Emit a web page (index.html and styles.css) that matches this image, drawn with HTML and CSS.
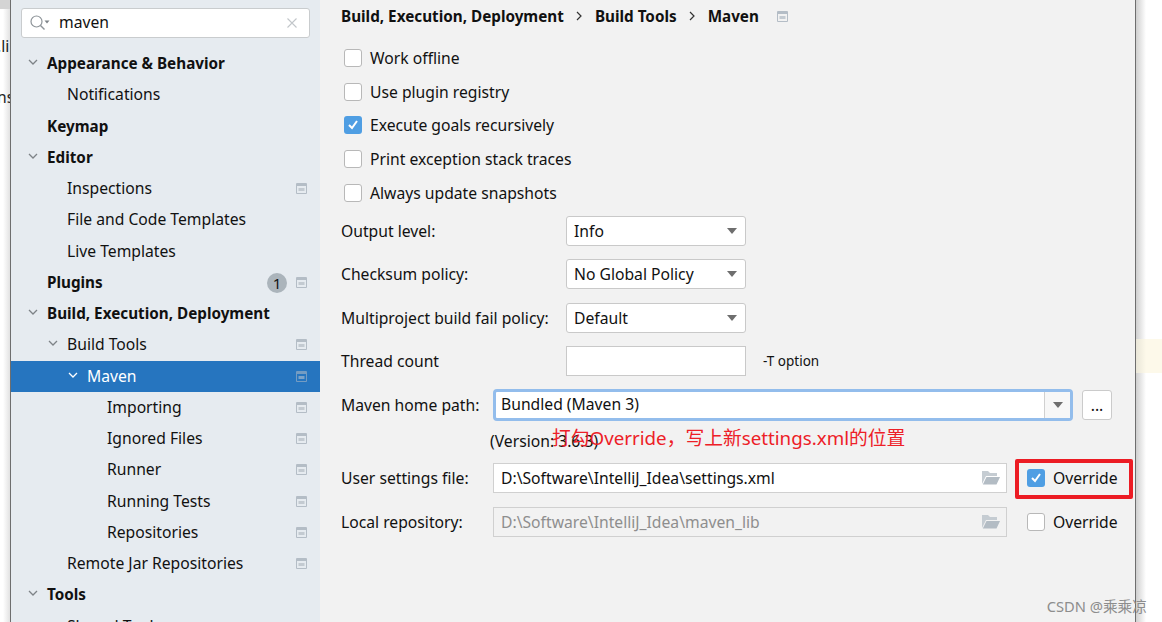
FILE: index.html
```html
<!DOCTYPE html>
<html lang="en">
<head>
    <meta charset="UTF-8">
    <meta name="viewport" content="width=device-width, initial-scale=1.0">
    <title>Settings - Maven</title>
    <link rel="stylesheet" href="styles.css">
</head>
<body>
    <svg class="defs" width="0" height="0">
        <symbol id="page" viewBox="0 0 11 11">
            <path d="M.5.5h10v10H.5z" fill="none" stroke="#b4bdc6"/>
            <path d="M1 1h9v2H1z" fill="#b4bdc6"/>
            <path d="M2.5 5h6v3h-6z" fill="#c3cad1"/>
        </symbol>
        <symbol id="open" viewBox="0 0 12 12">
            <path d="M2 4l4 4 4-4" fill="none" stroke="currentColor" stroke-width="1.3"/>
        </symbol>
        <symbol id="folder" viewBox="0 0 19 15">
            <path d="M1 14V1h6l2 2h7v3H5L1 14z" fill="#c5ccd2"/>
            <path d="M5.500 7H19l-3.500 7.500H1.800z" fill="#b3bcc4"/>
        </symbol>
    </svg>

    <div class="window-left">
        <div class="left-top"></div>
        <span class="cut-text cut-one">.li</span>
        <span class="cut-text cut-two">ns</span>
    </div>

    <aside class="sidebar">
        <div class="search">
            <svg class="search-icon" width="22" height="18" viewBox="0 0 22 18">
                <circle cx="7.500" cy="7.500" r="5.500" fill="none" stroke="#8e9499" stroke-width="1.200"/>
                <path d="M11.500 11.500l4 4" stroke="#8e9499" stroke-width="1.400"/>
                <path d="M15.500 6.500h5l-2.500 3z" fill="#7d8388"/>
            </svg>
            <span class="search-text">maven</span>
            <svg class="search-clear" width="10" height="10" viewBox="0 0 10 10">
                <path d="M.5.500l9 9M9.500.500l-9 9" stroke="#c2c6ca" stroke-width="1.100"/>
            </svg>
        </div>

        <ul class="tree">
            <li class="row lvl0 bold"><svg class="arrow"><use href="#open"/></svg>Appearance &amp; Behavior</li>
            <li class="row lvl1">Notifications</li>
            <li class="row lvl0 bold">Keymap</li>
            <li class="row lvl0 bold"><svg class="arrow"><use href="#open"/></svg>Editor</li>
            <li class="row lvl1">Inspections<svg class="page"><use href="#page"/></svg></li>
            <li class="row lvl1">File and Code Templates</li>
            <li class="row lvl1">Live Templates</li>
            <li class="row lvl0 bold">Plugins<span class="badge">1</span><svg class="page page-badge"><use href="#page"/></svg></li>
            <li class="row lvl0 bold"><svg class="arrow"><use href="#open"/></svg>Build, Execution, Deployment</li>
            <li class="row lvl1"><svg class="arrow"><use href="#open"/></svg>Build Tools<svg class="page"><use href="#page"/></svg></li>
            <li class="row lvl2 selected"><svg class="arrow"><use href="#open"/></svg>Maven<svg class="page"><use href="#page"/></svg></li>
            <li class="row lvl3">Importing<svg class="page"><use href="#page"/></svg></li>
            <li class="row lvl3">Ignored Files<svg class="page"><use href="#page"/></svg></li>
            <li class="row lvl3">Runner<svg class="page"><use href="#page"/></svg></li>
            <li class="row lvl3">Running Tests<svg class="page"><use href="#page"/></svg></li>
            <li class="row lvl3">Repositories<svg class="page"><use href="#page"/></svg></li>
            <li class="row lvl1">Remote Jar Repositories<svg class="page"><use href="#page"/></svg></li>
            <li class="row lvl0 bold"><svg class="arrow"><use href="#open"/></svg>Tools</li>
            <li class="row lvl1">Shared Tools</li>
        </ul>
    </aside>

    <main class="content">
        <div class="crumbs">
            <span>Build, Execution, Deployment</span>
            <svg class="crumb-sep" width="6" height="10" viewBox="0 0 6 10"><path d="M1 1l4 4-4 4" fill="none" stroke="#333" stroke-width="1.200"/></svg>
            <span>Build Tools</span>
            <svg class="crumb-sep" width="6" height="10" viewBox="0 0 6 10"><path d="M1 1l4 4-4 4" fill="none" stroke="#333" stroke-width="1.200"/></svg>
            <span>Maven</span>
            <svg class="page crumb-page"><use href="#page"/></svg>
        </div>

        <div class="checks">
            <label class="check"><span class="box"></span>Work offline</label>
            <label class="check"><span class="box"></span>Use plugin registry</label>
            <label class="check"><span class="box on"><svg width="18" height="18" viewBox="0 0 18 18"><path d="M5 9l3 3 5-7" fill="none" stroke="#fff" stroke-width="2"/></svg></span>Execute goals recursively</label>
            <label class="check"><span class="box"></span>Print exception stack traces</label>
            <label class="check"><span class="box"></span>Always update snapshots</label>
        </div>

        <div class="form-small">
            <div class="form-row"><span class="form-label">Output level:</span><div class="select">Info<i class="caret"></i></div></div>
            <div class="form-row"><span class="form-label">Checksum policy:</span><div class="select">No Global Policy<i class="caret"></i></div></div>
            <div class="form-row"><span class="form-label">Multiproject build fail policy:</span><div class="select">Default<i class="caret"></i></div></div>
            <div class="form-row"><span class="form-label">Thread count</span><div class="input-empty"></div><span class="hint">-T option</span></div>
        </div>

        <div class="form-wide">
            <div class="wide-row home-row">
                <span class="wide-label">Maven home path:</span>
                <div class="combo"><span class="combo-text">Bundled (Maven 3)</span><span class="combo-btn"><i class="caret"></i></span></div>
                <div class="dots">...</div>
            </div>
            <div class="version">(Version: 3.6.3)</div>
            <div class="wide-row settings-row">
                <span class="wide-label">User settings file:</span>
                <div class="path"><span>D:\Software\IntelliJ_Idea\settings.xml</span><svg class="folder"><use href="#folder"/></svg></div>
                <label class="check override"><span class="box on"><svg width="18" height="18" viewBox="0 0 18 18"><path d="M5 9l3 3 5-7" fill="none" stroke="#fff" stroke-width="2"/></svg></span>Override</label>
            </div>
            <div class="wide-row repo-row">
                <span class="wide-label">Local repository:</span>
                <div class="path disabled"><span>D:\Software\IntelliJ_Idea\maven_lib</span><svg class="folder"><use href="#folder"/></svg></div>
                <label class="check override"><span class="box"></span>Override</label>
            </div>
        </div>

        <div class="note">打勾Override，写上新settings.xml的位置</div>
        <div class="red-box"></div>
    </main>

    <div class="window-right">
        <div class="yellow-line"></div>
        <div class="watermark">CSDN @乘乘凉</div>
    </div>
</body>
</html>
```

FILE: styles.css
```css
* {
    box-sizing: border-box;
}
html, body {
    height: 100%;
}
body {
    margin: 0;
    height: 622px;
    overflow: hidden;
    display: flex;
    font-family: "Noto Sans", "Noto Sans CJK SC", sans-serif;
    font-size: 15.700px;
    color: #111;
    background: #fff;
}
.defs {
    position: absolute;
}

/* behind the dialog */
.window-left {
    position: relative;
    width: 11px;
    flex: none;
    overflow: hidden;
    background: linear-gradient(to right, #fff 0, #fff 3px, #e2e2e2 10px);
    border-right: 1px solid #6e6e6e;
}
.left-top {
    height: 9px;
    background: #d4d4d4;
}
.cut-text {
    position: absolute;
    left: -3px;
    color: #222;
}
.cut-one {
    top: 35px;
}
.cut-two {
    top: 86px;
}

/* left tree */
.sidebar {
    width: 309px;
    flex: none;
    background: #e6ebf0;
    overflow: hidden;
}
.search {
    display: flex;
    align-items: center;
    height: 30px;
    margin: 8px 10px 0 10px;
    padding: 0 12px 0 7px;
    background: #fff;
    border: 1px solid #c9ccce;
    border-radius: 3px;
}
.search-text {
    margin-left: 8px;
    flex: 1;
    position: relative;
    top: -1px;
}
.tree {
    list-style: none;
    margin: 10px 0 0;
    padding: 0;
}
.row {
    position: relative;
    height: 31.250px;
    line-height: 31px;
    white-space: nowrap;
}
.lvl0 {
    padding-left: 36px;
}
.lvl1 {
    padding-left: 56px;
}
.lvl2 {
    padding-left: 76px;
}
.lvl3 {
    padding-left: 96px;
}
.bold {
    font-weight: 700;
    font-size: 15.250px;
}
.arrow {
    position: absolute;
    width: 12px;
    height: 12px;
    margin-left: -20px;
    top: 8px;
    color: #7e8387;
}
.page {
    position: absolute;
    right: 13px;
    top: 10px;
    width: 11px;
    height: 11px;
}
.selected {
    background: #2675bf;
    color: #fff;
}
.selected .arrow {
    color: #fff;
}
.selected .page {
    opacity: 0.55;
}
.badge {
    position: absolute;
    right: 33px;
    top: 6px;
    width: 20px;
    height: 20px;
    border-radius: 50%;
    background: #abb4bb;
    font-weight: 400;
    text-align: center;
    line-height: 20px;
}

/* right panel */
.content {
    position: relative;
    width: 816px;
    flex: none;
    background: #f2f2f2;
    border-right: 1px solid #6e6e6e;
    padding: 5px 0 0 21px;
}
.crumbs {
    display: flex;
    align-items: center;
    height: 22px;
    font-weight: 700;
    font-size: 15.250px;
}
.crumb-sep {
    margin: 0 12.500px;
}
.crumb-page {
    position: static;
    margin-left: 18px;
}
.checks {
    margin-top: 14px;
}
.check {
    display: flex;
    align-items: center;
    height: 33.700px;
}
.box {
    width: 18px;
    height: 18px;
    margin: 0 8px 0 3px;
    background: #fff;
    border: 1px solid #b8b8b8;
    border-radius: 3px;
    flex: none;
}
.box.on {
    background: #4f9ee3;
    border: none;
}
.box svg {
    display: block;
}
.form-row {
    display: flex;
    align-items: center;
    height: 43.300px;
}
.form-label {
    width: 225px;
    flex: none;
}
.select, .input-empty {
    position: relative;
    width: 180px;
    height: 30px;
    line-height: 28px;
    padding-left: 7px;
    background: #fff;
    border: 1px solid #c9c9c9;
    border-radius: 3px;
}
.input-empty {
    border-radius: 0;
}
.caret {
    display: block;
    width: 0;
    height: 0;
    border-left: 5.500px solid transparent;
    border-right: 5.500px solid transparent;
    border-top: 6px solid #6e6e6e;
}
.select .caret {
    position: absolute;
    right: 8px;
    top: 11px;
}
.hint {
    margin-left: 17px;
    font-size: 13.500px;
}
.form-wide {
    margin-top: 1px;
}
.wide-row {
    display: flex;
    align-items: center;
}
.wide-label {
    width: 152px;
    flex: none;
}
.home-row {
    height: 43px;
}
.combo {
    display: flex;
    width: 580px;
    height: 32px;
    background: #fff;
    border: 3px solid #93bdec;
    border-radius: 4px;
}
.combo-text {
    flex: 1;
    line-height: 25px;
    padding-left: 5px;
}
.combo-btn {
    display: flex;
    align-items: center;
    justify-content: center;
    width: 26px;
    background: #f7f7f7;
    border-left: 1px solid #d0d0d0;
}
.dots {
    width: 30px;
    height: 30px;
    margin-left: 9px;
    background: #fff;
    border: 1px solid #cbcbcb;
    border-radius: 3px;
    text-align: center;
    line-height: 28px;
}
.version {
    height: 29px;
    line-height: 28px;
    padding-left: 149px;
}
.settings-row {
    height: 44px;
}
.repo-row {
    height: 44px;
}
.path {
    display: flex;
    align-items: center;
    justify-content: space-between;
    width: 514px;
    height: 30px;
    padding: 0 7px;
    background: #fff;
    border: 1px solid #d0d0d0;
}
.path.disabled {
    background: #f2f2f2;
    color: #8e8e8e;
}
.folder {
    width: 19px;
    height: 15px;
    margin-right: -1px;
}
.override {
    margin-left: 17px;
    height: auto;
}

/* annotation drawn over the screenshot */
.note {
    position: absolute;
    left: 232px;
    top: 426px;
    color: #ed2027;
    font-size: 18.750px;
    line-height: 24px;
    white-space: nowrap;
}
.red-box {
    position: absolute;
    left: 695px;
    top: 459px;
    width: 118px;
    height: 40px;
    border: 4px solid #ec1c24;
    border-radius: 2px;
}

.window-right {
    position: relative;
    flex: 1;
    background: linear-gradient(to right, #cfcfcf 0, #fff 10px);
}
.yellow-line {
    position: absolute;
    left: 0;
    right: 0;
    top: 339px;
    height: 34px;
    background: linear-gradient(to right, #e9e6d8 0, #fdf9ea 10px);
}
.watermark {
    position: absolute;
    right: 15px;
    top: 597px;
    color: #8d8d8d;
    font-size: 14.700px;
    line-height: 18px;
    white-space: nowrap;
}
```
